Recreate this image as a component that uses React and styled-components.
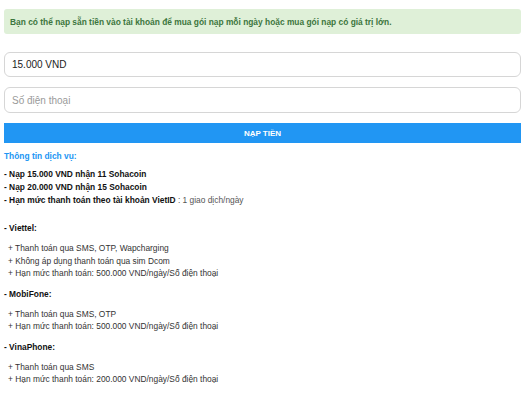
import React from "react";
import styled, { createGlobalStyle } from "styled-components";

const Global = createGlobalStyle`
  html, body { margin: 0; padding: 0; background: #fff; }
  body { font-family: "Liberation Sans", Arial, sans-serif; }
`;

const Page = styled.div`
  padding: 9px 9px 0 4px;
  display: flex;
  flex-direction: column;
`;

const Banner = styled.div`
  height: 25px;
  box-sizing: border-box;
  background: #dff0d8;
  border-radius: 3px;
  padding: 0 6px;
  display: flex;
  align-items: center;
  color: #3c763d;
  font-weight: bold;
  font-size: 8.4px;
`;

const Field = styled.input`
  box-sizing: border-box;
  width: 100%;
  height: ${(p) => p.$h}px;
  margin-top: ${(p) => p.$mt}px;
  border: 1px solid #d6d6d6;
  border-radius: 6px;
  padding: 0 7px;
  font-family: "Liberation Sans", Arial, sans-serif;
  font-size: 10px;
  color: #222;
  outline: none;
  &::placeholder { color: #9a9a9a; }
`;

const Button = styled.button`
  margin-top: 10px;
  height: 20px;
  border: none;
  background: #2196f3;
  color: #fff;
  font-family: "Liberation Sans", Arial, sans-serif;
  font-weight: bold;
  font-size: 8px;
  cursor: pointer;
`;

const Title = styled.div`
  margin-top: 7px;
  color: #2196f3;
  font-weight: bold;
  font-size: 8.4px;
  line-height: 13px;
`;

const Lines = styled.div`
  margin-top: ${(p) => p.$mt}px;
  font-size: 8.4px;
  line-height: 13px;
  color: #333;
`;

const Strong = styled.div`
  font-weight: bold;
  color: #111;
`;

const Normal = styled.span`
  font-weight: normal;
  color: #555;
`;

const Item = styled.div`
  padding-left: 4px;
  color: #333;
`;

const Carrier = styled.div`
  margin-top: ${(p) => p.$mt}px;
  font-size: 8.4px;
  line-height: 13px;
`;

const Items = styled.div`
  margin-top: 7px;
  font-size: 8.4px;
  line-height: 12.5px;
`;

const carriers = [
  {
    name: "- Viettel:",
    mt: 15,
    items: [
      "+ Thanh toán qua SMS, OTP, Wapcharging",
      "+ Không áp dụng thanh toán qua sim Dcom",
      "+ Hạn mức thanh toán: 500.000 VND/ngày/Số điện thoại",
    ],
  },
  {
    name: "- MobiFone:",
    mt: 8,
    items: [
      "+ Thanh toán qua SMS, OTP",
      "+ Hạn mức thanh toán: 500.000 VND/ngày/Số điện thoại",
    ],
  },
  {
    name: "- VinaPhone:",
    mt: 8,
    items: [
      "+ Thanh toán qua SMS",
      "+ Hạn mức thanh toán: 200.000 VND/ngày/Số điện thoại",
    ],
  },
];

export default function App() {
  return (
    <>
      <Global />
      <Page>
        <Banner>
          Bạn có thể nạp sẵn tiền vào tài khoản để mua gói nạp mỗi ngày hoặc mua gói nạp có giá trị lớn.
        </Banner>
        <Field $h={25} $mt={18} defaultValue="15.000 VND" />
        <Field $h={26} $mt={10} placeholder="Số điện thoại" />
        <Button>NẠP TIỀN</Button>
        <Title>Thông tin dịch vụ:</Title>
        <Lines $mt={5}>
          <Strong>- Nạp 15.000 VND nhận 11 Sohacoin</Strong>
          <Strong>- Nạp 20.000 VND nhận 15 Sohacoin</Strong>
          <Strong>
            - Hạn mức thanh toán theo tài khoản VietID <Normal>: 1 giao dịch/ngày</Normal>
          </Strong>
        </Lines>
        {carriers.map((c) => (
          <React.Fragment key={c.name}>
            <Carrier $mt={c.mt}>
              <Strong>{c.name}</Strong>
            </Carrier>
            <Items>
              {c.items.map((t) => (
                <Item key={t}>{t}</Item>
              ))}
            </Items>
          </React.Fragment>
        ))}
      </Page>
    </>
  );
}
